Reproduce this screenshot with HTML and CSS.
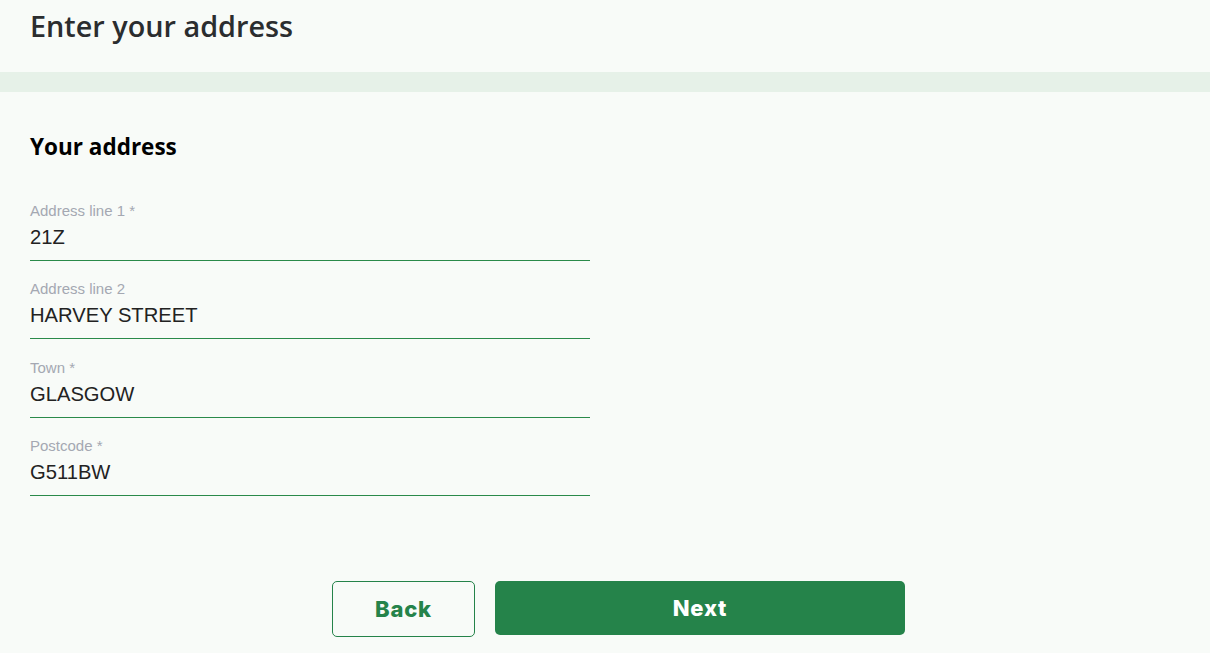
FILE: index.html
```html
<!DOCTYPE html>
<html lang="en">
<head>
    <meta charset="UTF-8">
    <meta name="viewport" content="width=device-width, initial-scale=1.0">
    <title>Enter your address</title>
    <link rel="stylesheet" href="styles.css">
</head>
<body>
    <!-- Page header -->
    <header class="page-header">
        <h1>Enter your address</h1>
    </header>
    <div class="band"></div>

    <main class="content">
        <h2>Your address</h2>

        <form class="address-form">
            <div class="field">
                <label for="line1">Address line 1 *</label>
                <input type="text" id="line1" value="21Z">
            </div>
            <div class="field">
                <label for="line2">Address line 2</label>
                <input type="text" id="line2" value="HARVEY STREET">
            </div>
            <div class="field">
                <label for="town">Town *</label>
                <input type="text" id="town" value="GLASGOW">
            </div>
            <div class="field">
                <label for="postcode">Postcode *</label>
                <input type="text" id="postcode" value="G511BW">
            </div>
        </form>

        <div class="actions">
            <button type="button" class="btn btn-back">Back</button>
            <button type="button" class="btn btn-next">Next</button>
        </div>
    </main>
</body>
</html>
```

FILE: styles.css
```css
body {
  font-family: "Liberation Sans", Arial, sans-serif;
  margin: 0;
  padding: 0;
  background-color: #f8fbf8;
  color: #222;
}

/* Header */
.page-header {
  padding: 6px 30px 26px;
}

.page-header h1 {
  margin: 0;
  font-family: "Open Sans", sans-serif;
  font-weight: 600;
  font-size: 28.8px;
  line-height: 40px;
  color: #2b2d2f;
}

.band {
  height: 20px;
  background-color: #e6f1e8;
}

/* Form */
.content {
  padding: 39px 30px 0;
}

.content h2 {
  margin: 0 0 37px;
  font-family: "Open Sans", sans-serif;
  font-weight: 700;
  font-size: 22.5px;
  line-height: 32px;
  color: #000;
}

.address-form {
  width: 560px;
}

.field {
  display: flex;
  flex-direction: column;
  gap: 5px;
  padding-top: 2px;
  padding-bottom: 11px;
  margin-bottom: 17.4px;
  border-bottom: 1px solid #2a8a4a;
}

.field label {
  font-size: 15px;
  line-height: 18px;
  color: #a4a8b2;
}

.field input {
  border: none;
  background: transparent;
  padding: 0;
  margin: 0;
  font-family: "Liberation Sans", Arial, sans-serif;
  font-size: 20.2px;
  line-height: 24px;
  height: 24px;
  color: #222;
  outline: none;
}

/* Buttons */
.actions {
  display: flex;
  justify-content: center;
  align-items: flex-start;
  gap: 20px;
  margin-top: 85px;
  padding-left: 27px;
}

.btn {
  font-family: "Inter", sans-serif;
  font-weight: 800;
  font-size: 22px;
  letter-spacing: 0.8px;
  border-radius: 5px;
  cursor: pointer;
}

.btn-back {
  width: 143px;
  height: 56px;
  background-color: transparent;
  color: #25834a;
  border: 1px solid #25834a;
}

.btn-next {
  width: 410px;
  height: 54px;
  background-color: #25834a;
  color: #fff;
  border: none;
}
```
